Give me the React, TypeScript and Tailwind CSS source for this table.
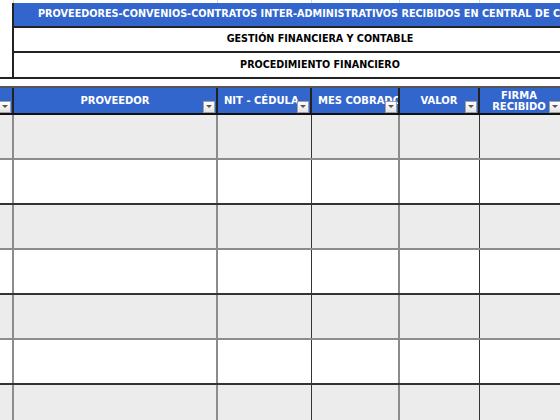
import React from "react";

const COLS = [
  { w: "w-[14px]", label: "", line: "border-[#8c8c8c] border-r-2" },
  { w: "w-[204px]", label: "PROVEEDOR", line: "border-[#8c8c8c] border-r-2" },
  { w: "w-[94px]", label: "NIT - CÉDULA", line: "border-[#333] border-r" },
  { w: "w-[88px]", label: "MES COBRADO", line: "border-[#8c8c8c] border-r-2" },
  { w: "w-[80px]", label: "VALOR", line: "border-[#333] border-r" },
  { w: "w-[82px]", label: "FIRMA RECIBIDO", line: "" },
];

function FilterButton() {
  return (
    <span className="absolute right-[1px] bottom-[0px] w-[12px] h-[12px] bg-gradient-to-b from-white to-[#e4e4e4] border border-[#a0a0a0] flex items-center justify-center">
      <svg width="6" height="4" viewBox="0 0 6 4">
        <path d="M0 0 L6 0 L3 3 Z" fill="#555" />
      </svg>
    </span>
  );
}

export default function App() {
  const rows = [0, 1, 2, 3, 4, 5, 6];
  return (
    <div
      className="w-[560px] h-[420px] overflow-hidden bg-white text-[10px]"
      style={{ fontFamily: "Tahoma, 'DejaVu Sans', Verdana, sans-serif" }}
    >
      {/* previous grid row */}
      <div className="flex h-[3px]">
        <div className="w-[14px] border-r border-[#d4d4d4]" />
        <div className="w-[204px] border-r border-[#d4d4d4]" />
        <div className="w-[94px] border-r border-[#d4d4d4]" />
        <div className="w-[88px] border-r border-[#d4d4d4]" />
        <div className="w-[80px] border-r border-[#d4d4d4]" />
      </div>

      {/* title block */}
      <div className="flex border-b-2 border-[#222]">
        <div className="w-[14px] shrink-0 border-r-2 border-[#222]" />
        <div className="w-[612px] shrink-0 flex flex-col font-bold">
          <div className="h-[25px] bg-[#3366cc] text-white flex items-center pl-[24px] whitespace-nowrap border-b-2 border-[#222] text-[9.7px]">
            PROVEEDORES-CONVENIOS-CONTRATOS INTER-ADMINISTRATIVOS RECIBIDOS EN CENTRAL DE CUENTAS
          </div>
          <div className="h-[25px] text-black flex items-center justify-center border-b-2 border-[#222] text-[9.6px]">
            GESTIÓN FINANCIERA Y CONTABLE
          </div>
          <div className="h-[24px] text-black flex items-center justify-center text-[9.6px]">
            PROCEDIMIENTO FINANCIERO
          </div>
        </div>
      </div>

      {/* blank row */}
      <div className="h-[9px] border-b-2 border-[#555]" />

      {/* header row */}
      <div className="flex h-[27px] bg-[#3366cc] border-b-2 border-[#111] font-bold text-white">
        {COLS.map((c, i) => (
          <div
            key={i}
            className={`${c.w} shrink-0 relative overflow-hidden flex items-center justify-center text-center leading-[11px] ${
              i === 5 ? "" : "border-r-2 border-[#222]"
            }`}
          >
            {c.label === "FIRMA RECIBIDO" ? (
              <span className="pr-[4px]">
                FIRMA
                <br />
                RECIBIDO
              </span>
            ) : i === 2 || i === 3 ? (
              <span className="whitespace-nowrap absolute left-[6px]">{c.label}</span>
            ) : (
              <span className="whitespace-nowrap">{c.label}</span>
            )}
            <FilterButton />
          </div>
        ))}
      </div>

      {/* data rows */}
      {rows.map((r) => (
        <div
          key={r}
          className={`flex h-[45px] ${r % 2 === 0 ? "bg-[#ececec] border-b-2 border-[#8c8c8c]" : "bg-white border-b-2 border-[#333]"}`}
        >
          {COLS.map((c, i) => (
            <div key={i} className={`${c.w} shrink-0 ${c.line}`} />
          ))}
        </div>
      ))}
    </div>
  );
}
